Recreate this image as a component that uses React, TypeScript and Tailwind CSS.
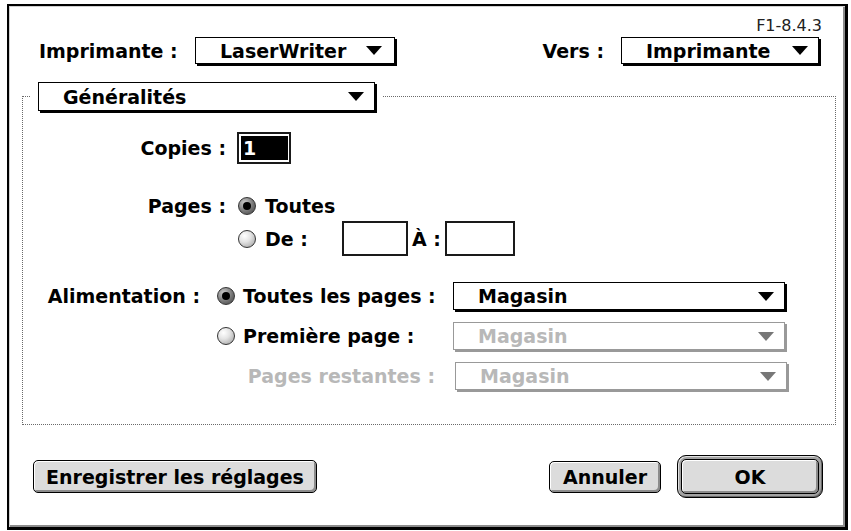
import React from 'react'

function Triangle({ disabled }: { disabled?: boolean }) {
  return (
    <svg width="16" height="9" viewBox="0 0 16 9" className="shrink-0">
      <polygon points="0,0 16,0 8,9" fill={disabled ? '#777777' : '#000000'} />
    </svg>
  )
}

function Popup({
  label,
  className = '',
  disabled,
}: {
  label: string
  className?: string
  disabled?: boolean
}) {
  return (
    <div
      className={`flex items-center justify-between bg-white border pl-[24px] pr-[10px] ${
        disabled
          ? 'border-[#999999] shadow-[2px_2px_0_#999999] text-[#b8b8b8]'
          : 'border-black shadow-[2px_2px_0_#000000] text-black'
      } ${className}`}
    >
      <span>{label}</span>
      <Triangle disabled={disabled} />
    </div>
  )
}

function Radio({ checked }: { checked?: boolean }) {
  return (
    <span
      className={`flex items-center justify-center w-[18px] h-[18px] rounded-full border border-[#333333] shrink-0 ${
        checked
          ? 'bg-[radial-gradient(circle_at_35%_30%,#c8c8c8_0%,#707070_60%,#404040_100%)]'
          : 'bg-[radial-gradient(circle_at_35%_30%,#ffffff_0%,#e4e4e4_40%,#9a9a9a_100%)]'
      }`}
    >
      {checked && <span className="w-[8px] h-[8px] rounded-full bg-black" />}
    </span>
  )
}

function Button({ children, className = '' }: { children: React.ReactNode; className?: string }) {
  return (
    <div
      className={`flex items-center justify-center rounded-[5px] border border-black bg-[#dcdcdc] shadow-[inset_1px_1px_0_#ffffff,inset_-2px_-2px_0_#8c8c8c] ${className}`}
    >
      {children}
    </div>
  )
}

export default function App() {
  return (
    <div className="w-[851px] h-[531px] bg-white overflow-hidden font-['DejaVu_Sans',sans-serif] font-bold text-[19px] leading-[22px] text-black pt-[4px] pl-[7px]">
      <div className="w-[841px] h-[526px] border-t-2 border-l-2 border-r-[3px] border-b-[3px] border-black bg-white shadow-[inset_1px_1px_0_#d0d0d0,inset_-2px_-2px_0_#8c8c8c] pt-[10px] flex flex-col">
        {/* version */}
        <div className="flex justify-end pr-[23px] text-[16px] leading-[19px] font-normal text-[#222222]">
          F1-8.4.3
        </div>

        {/* printer / destination */}
        <div className="mt-[2px] flex items-center justify-between pl-[30px] pr-[26px]">
          <div className="flex items-center">
            <span className="w-[156px]">Imprimante :</span>
            <Popup label="LaserWriter" className="w-[200px] h-[27px] pr-[12px]" />
          </div>
          <div className="flex items-center">
            <span className="mr-[17px]">Vers :</span>
            <Popup label="Imprimante" className="w-[198px] h-[27px]" />
          </div>
        </div>

        {/* group box */}
        <fieldset className="mt-[18px] ml-[13px] mr-[9px] border border-dotted border-[#6a6a6a] px-0 pt-[21px] pb-[34px] min-w-0">
          <legend className="ml-[7px] px-[8px]">
            <Popup label="Généralités" className="w-[337px] h-[29px]" />
          </legend>

          {/* copies */}
          <div className="flex items-center">
            <span className="w-[203px] text-right">Copies :</span>
            <div className="ml-[11px] w-[54px] h-[32px] border-2 border-[#1a1a1a] p-[2px] pr-[1px]">
              <div className="w-full h-full bg-black text-white pl-[2px] flex items-center">1</div>
            </div>
          </div>

          {/* pages */}
          <div className="mt-[32px] flex items-center h-[20px]">
            <span className="w-[203px] text-right">Pages :</span>
            <span className="ml-[12px]">
              <Radio checked />
            </span>
            <span className="ml-[9px]">Toutes</span>
          </div>
          <div className="mt-[5px] flex items-center h-[35px] pl-[215px]">
            <Radio />
            <span className="ml-[9px] w-[77px]">De :</span>
            <div className="w-[66px] h-[35px] border-2 border-[#1a1a1a] bg-white" />
            <span className="ml-[4px] w-[33px]">À :</span>
            <div className="w-[70px] h-[35px] border-2 border-[#1a1a1a] bg-white" />
          </div>

          {/* paper source */}
          <div className="mt-[26px] flex flex-col gap-[12px]">
            <div className="flex items-center h-[28px]">
              <span className="w-[177px] text-right">Alimentation :</span>
              <div className="ml-[17px] w-[236px] flex items-center">
                <Radio checked />
                <span className="ml-[8px]">Toutes les pages :</span>
              </div>
              <Popup label="Magasin" className="w-[332px] h-[28px]" />
            </div>
            <div className="flex items-center h-[28px]">
              <div className="ml-[194px] w-[236px] flex items-center">
                <Radio />
                <span className="ml-[8px]">Première page :</span>
              </div>
              <Popup label="Magasin" disabled className="w-[332px] h-[28px]" />
            </div>
            <div className="flex items-center h-[28px]">
              <span className="w-[430px] text-right pr-[18px] text-[#b8b8b8]">Pages restantes :</span>
              <Popup label="Magasin" disabled className="ml-[2px] w-[332px] h-[28px]" />
            </div>
          </div>
        </fieldset>

        {/* buttons */}
        <div className="mt-[30px] flex items-center justify-between pl-[24px] pr-[22px] h-[43px]">
          <Button className="w-[284px] h-[33px]">Enregistrer les réglages</Button>
          <div className="flex items-center gap-[16px]">
            <Button className="w-[112px] h-[32px]">Annuler</Button>
            <div className="w-[146px] h-[43px] rounded-[9px] border border-black bg-[#a4a4a4] p-[3px] shadow-[inset_1px_1px_0_#e0e0e0,inset_-1px_-1px_0_#6a6a6a]">
              <Button className="w-full h-full">OK</Button>
            </div>
          </div>
        </div>
      </div>
    </div>
  )
}
